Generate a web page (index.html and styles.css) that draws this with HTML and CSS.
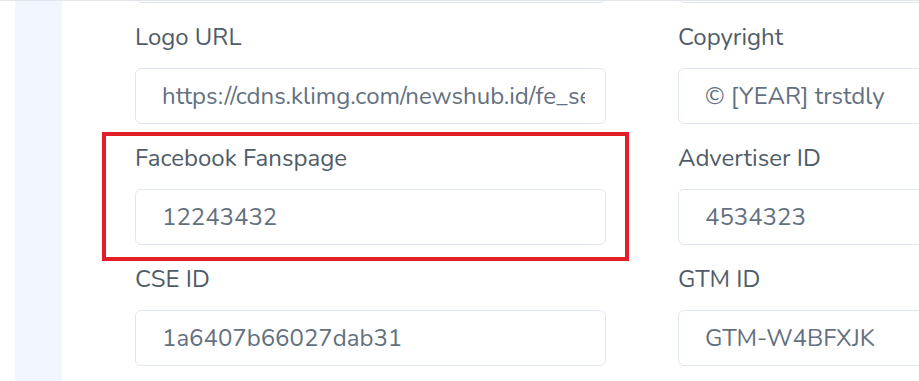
FILE: index.html
```html
<!DOCTYPE html>
<html lang="en">
<head>
    <meta charset="UTF-8">
    <meta name="viewport" content="width=device-width, initial-scale=1.0">
    <title>Site Settings</title>
    <link rel="stylesheet" href="styles.css">
</head>
<body>
    <div class="page">
        <div class="rail"></div>
        <div class="content">
            <div class="form">
                <!-- previous row, scrolled out of view -->
                <div class="field prev"><input type="text" readonly></div>
                <div class="field prev"><input type="text" readonly></div>

                <div class="field">
                    <label for="logo-url">Logo URL</label>
                    <input type="text" id="logo-url" value="https://cdns.klimg.com/newshub.id/fe_settings/logo.png" readonly>
                </div>
                <div class="field">
                    <label for="copyright">Copyright</label>
                    <input type="text" id="copyright" value="© [YEAR] trstdly" readonly>
                </div>

                <div class="field highlighted">
                    <label for="fb-page">Facebook Fanspage</label>
                    <input type="text" id="fb-page" value="12243432" readonly>
                </div>
                <div class="field">
                    <label for="advertiser-id">Advertiser ID</label>
                    <input type="text" id="advertiser-id" value="4534323" readonly>
                </div>

                <div class="field">
                    <label for="cse-id">CSE ID</label>
                    <input type="text" id="cse-id" value="1a6407b66027dab31" readonly>
                </div>
                <div class="field">
                    <label for="gtm-id">GTM ID</label>
                    <input type="text" id="gtm-id" value="GTM-W4BFXJK" readonly>
                </div>
            </div>
        </div>
    </div>
</body>
</html>
```

FILE: styles.css
```css
html, body {
    margin: 0;
    height: 100%;
    overflow: hidden;
}
body {
    font-family: "Nunito", "Noto Sans", Arial, sans-serif;
    background-color: #fff;
    border-top: 1px solid #e2e6eb;
    box-sizing: border-box;
}
.page {
    display: flex;
    height: 100%;
}
.rail {
    width: 47px;
    margin-left: 15px;
    background-color: #f0f5fe;
    flex-shrink: 0;
}
.content {
    flex: 1;
    padding-left: 73px;
    overflow: hidden;
}
.form {
    display: grid;
    grid-template-columns: 471px 471px;
    column-gap: 72px;
    margin-top: -54px;
}
.field {
    position: relative;
    margin-bottom: 19px;
}
.field label {
    display: block;
    font-size: 24px;
    line-height: 30px;
    color: #4f5c68;
    margin-bottom: 16px;
}
.field input {
    display: block;
    width: 100%;
    height: 56px;
    box-sizing: border-box;
    padding: 0 20px 0 26px;
    font-family: inherit;
    font-size: 24px;
    color: #637080;
    background-color: #fff;
    border: 1px solid #e1e7ef;
    border-radius: 6px;
    outline: none;
}
.highlighted::after {
    content: "";
    position: absolute;
    top: -11px;
    left: -33px;
    width: 527px;
    height: 129px;
    box-sizing: border-box;
    border: 4px solid #e41e26;
    pointer-events: none;
}
```
